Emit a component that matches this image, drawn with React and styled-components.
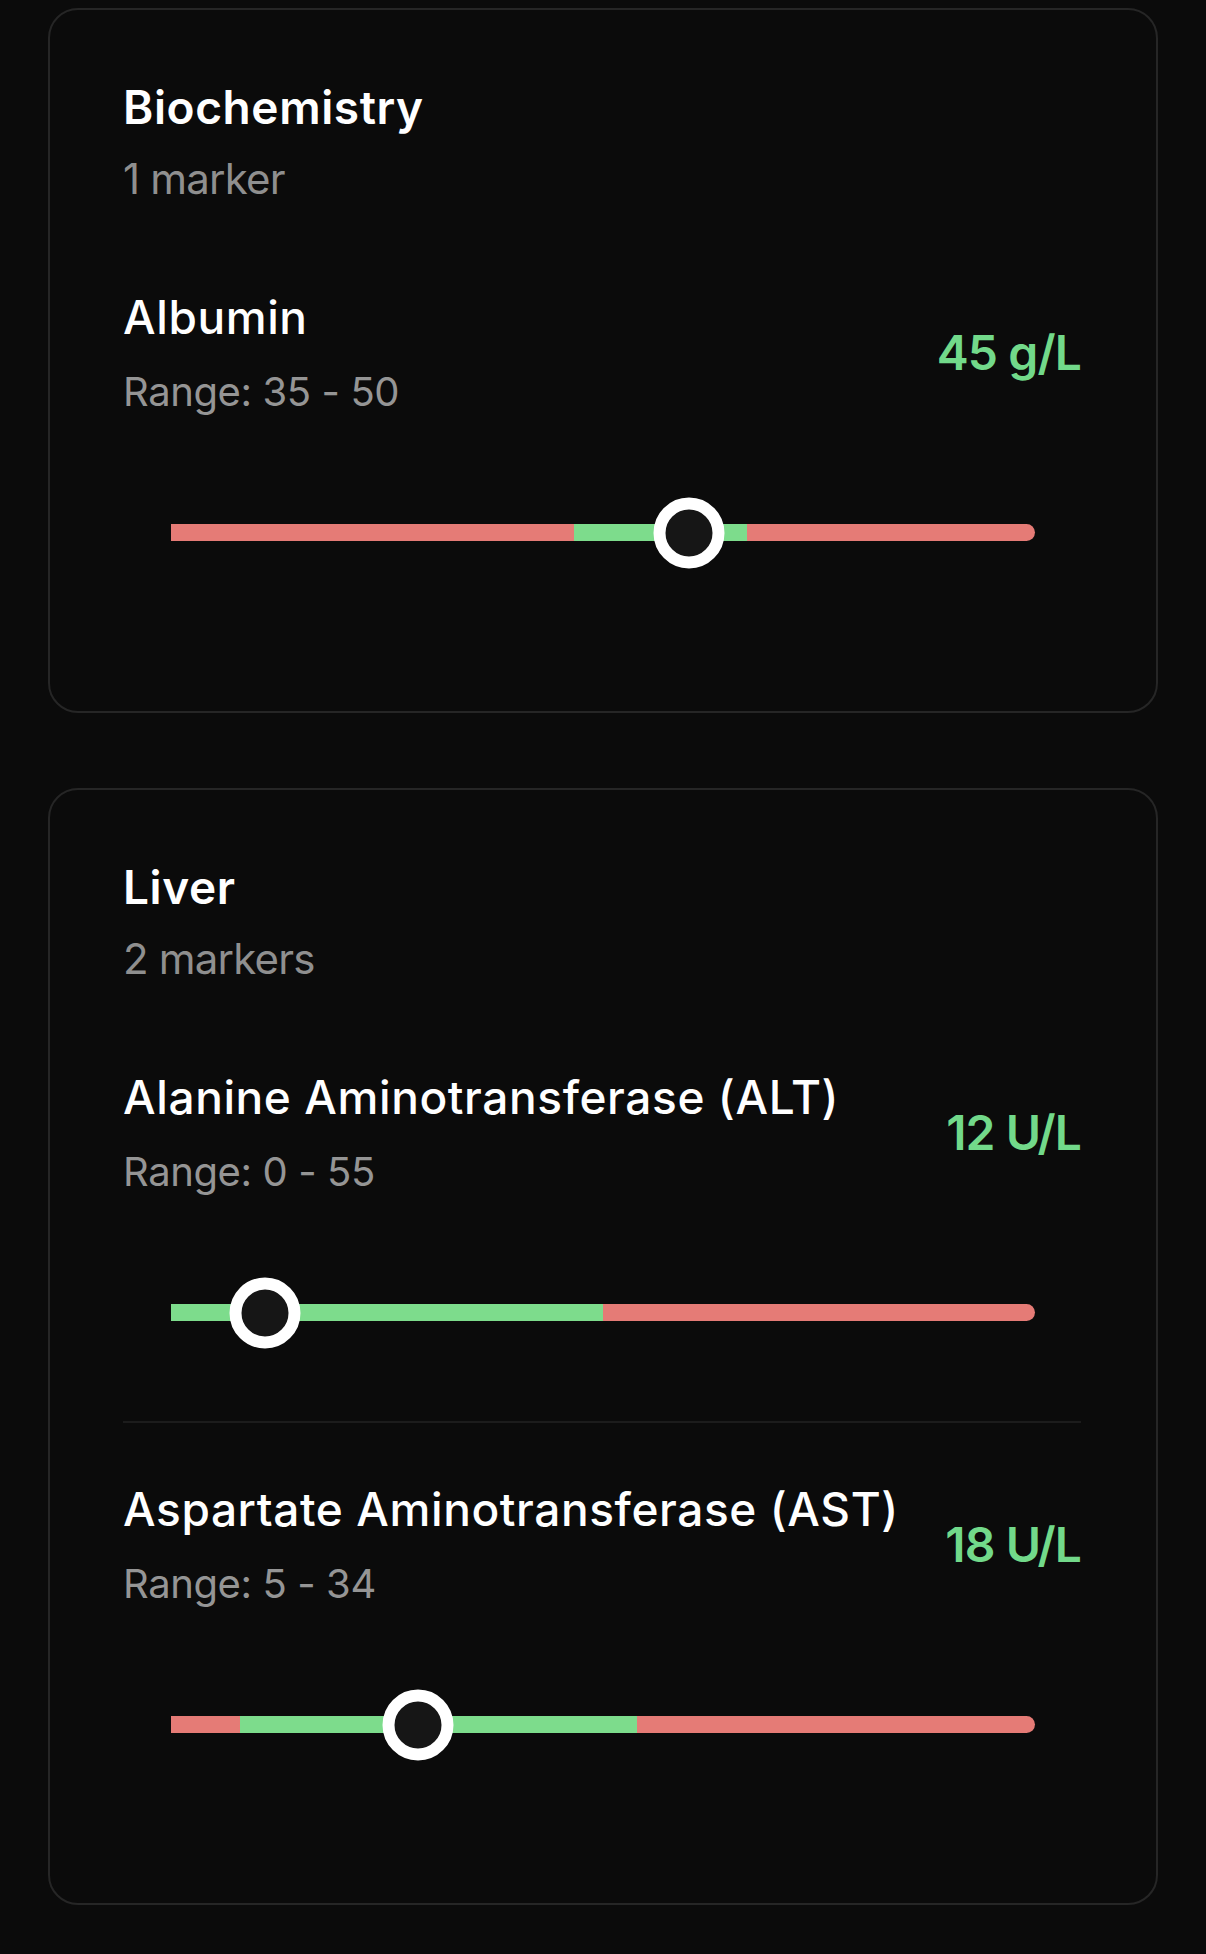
import styled, { createGlobalStyle } from 'styled-components';

const GlobalStyle = createGlobalStyle`
  html, body {
    margin: 0;
    padding: 0;
    background: #0b0b0b;
  }
  body {
    font-family: Inter, "Noto Sans", "Liberation Sans", sans-serif;
    color: #ffffff;
  }
`;

const RED = '#e57b76';
const GREEN = '#7ddc8c';

const panels = [
  {
    title: 'Biochemistry',
    markers: [{ name: 'Albumin', low: 35, high: 50, value: 45, unit: 'g/L' }],
  },
  {
    title: 'Liver',
    markers: [
      { name: 'Alanine Aminotransferase (ALT)', low: 0, high: 55, value: 12, unit: 'U/L' },
      { name: 'Aspartate Aminotransferase (AST)', low: 5, high: 34, value: 18, unit: 'U/L' },
    ],
  },
];

function RangeBar({ low, high, value }) {
  const max = Math.max(high + (high - low), high * 1.5);
  const pct = (n) => (n / max) * 100;
  return (
    <BarArea>
      <Track>
        <Segment $color={RED} style={{ width: `${pct(low)}%` }} />
        <Segment $color={GREEN} style={{ width: `${pct(high - low)}%` }} />
        <Segment $color={RED} $last style={{ flex: 1 }} />
        <Knob style={{ left: `${pct(value)}%` }} />
      </Track>
    </BarArea>
  );
}

export default function App() {
  return (
    <Page>
      <GlobalStyle />
      {panels.map((panel) => (
        <Card key={panel.title}>
          <Header>
            <Title>{panel.title}</Title>
            <Subtitle>
              {panel.markers.length} {panel.markers.length === 1 ? 'marker' : 'markers'}
            </Subtitle>
          </Header>
          {panel.markers.map((m) => (
            <Marker key={m.name}>
              <MarkerHead>
                <div>
                  <MarkerName>{m.name}</MarkerName>
                  <MarkerRange>
                    Range: {m.low} - {m.high}
                  </MarkerRange>
                </div>
                <Value>
                  {m.value} {m.unit}
                </Value>
              </MarkerHead>
              <RangeBar low={m.low} high={m.high} value={m.value} />
            </Marker>
          ))}
        </Card>
      ))}
    </Page>
  );
}

const Page = styled.div`
  display: flex;
  flex-direction: column;
  gap: 75px;
  padding: 8px 48px 48px;
`;

const Card = styled.div`
  border: 2px solid #262626;
  border-radius: 30px;
  background: #0b0b0b;
  padding: 69px 75px 70px 73px;
`;

const Header = styled.div`
  margin-bottom: 24px;
`;

const Title = styled.h2`
  margin: 0;
  font-size: 46px;
  line-height: 56px;
  font-weight: 600;
  letter-spacing: 0.6px;
  color: #ffffff;
`;

const Subtitle = styled.div`
  margin-top: 18px;
  font-size: 42px;
  line-height: 52px;
  letter-spacing: -0.8px;
  color: #8f8f8f;
`;

const Marker = styled.div`
  padding: 60px 0 73px;
  & + & {
    border-top: 2px solid #1c1c1c;
    padding-top: 58px;
  }
`;

const MarkerHead = styled.div`
  display: flex;
  align-items: center;
  justify-content: space-between;
  gap: 24px;
`;

const MarkerName = styled.div`
  font-size: 46px;
  line-height: 56px;
  font-weight: 500;
  letter-spacing: 0.6px;
  color: #ffffff;
`;

const MarkerRange = styled.div`
  margin-top: 22px;
  font-size: 40px;
  line-height: 50px;
  letter-spacing: -0.4px;
  color: #959595;
`;

const Value = styled.div`
  font-size: 48px;
  line-height: 60px;
  font-weight: 600;
  letter-spacing: -0.9px;
  color: #72d98a;
  white-space: nowrap;
`;

const BarArea = styled.div`
  margin-top: 80px;
  padding: 27px 46px 27px 48px;
`;

const Track = styled.div`
  position: relative;
  display: flex;
  height: 17px;
`;

const Segment = styled.div`
  height: 100%;
  background: ${(p) => p.$color};
  border-radius: ${(p) => (p.$last ? '0 9px 9px 0' : '0')};
`;

const Knob = styled.div`
  position: absolute;
  top: 50%;
  width: 71px;
  height: 71px;
  box-sizing: border-box;
  border: 12px solid #ffffff;
  border-radius: 50%;
  background: #161616;
  transform: translate(-50%, -50%);
`;
